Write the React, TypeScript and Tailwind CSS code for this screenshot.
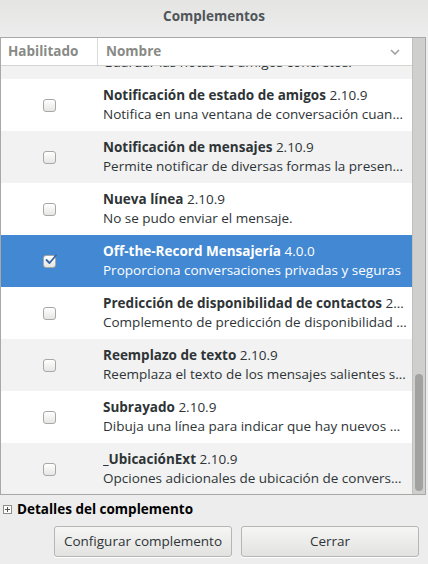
import { ReactNode } from 'react';

type Plugin = {
    name: string;
    version: string;
    desc: string;
    checked?: boolean;
};

const plugins: Plugin[] = [
    { name: 'Notas de amigos', version: '2.10.9', desc: 'Guardar las notas de amigos concretos.' },
    { name: 'Notificación de estado de amigos', version: '2.10.9', desc: 'Notifica en una ventana de conversación cuando un amigo cambia de estado' },
    { name: 'Notificación de mensajes', version: '2.10.9', desc: 'Permite notificar de diversas formas la presencia de mensajes nuevos' },
    { name: 'Nueva línea', version: '2.10.9', desc: 'No se pudo enviar el mensaje.' },
    { name: 'Off-the-Record Mensajería', version: '4.0.0', desc: 'Proporciona conversaciones privadas y seguras', checked: true },
    { name: 'Predicción de disponibilidad de contactos', version: '2.10.9', desc: 'Complemento de predicción de disponibilidad de contactos' },
    { name: 'Reemplazo de texto', version: '2.10.9', desc: 'Reemplaza el texto de los mensajes salientes según reglas' },
    { name: 'Subrayado', version: '2.10.9', desc: 'Dibuja una línea para indicar que hay nuevos mensajes' },
    { name: '_UbicaciónExt', version: '2.10.9', desc: 'Opciones adicionales de ubicación de conversaciones' },
];

function CheckBox({ checked }: { checked?: boolean }) {
    return (
        <div className="relative size-[13px] rounded-[3px] border border-[#a7a9a5] bg-gradient-to-b from-white to-[#e6e6e4] shadow-[inset_0_1px_0_#fff]">
            {checked && (
                <svg className="absolute -top-[3px] left-[1px]" width="13" height="13" viewBox="0 0 13 13">
                    <path d="M1.5 7 L4.5 10 L11 2.5" fill="none" stroke="#3465a4" strokeWidth="1.8" strokeLinecap="round" strokeLinejoin="round" />
                </svg>
            )}
        </div>
    );
}

function Button({ children }: { children: ReactNode }) {
    return (
        <button className="h-[31px] w-[178px] rounded-[3px] border border-[#b5b7b3] bg-gradient-to-b from-[#f6f6f5] to-[#e2e2e0] text-[13.5px] text-[#2e3436] shadow-[0_1px_0_#fff]">
            {children}
        </button>
    );
}

export default function App() {
    return (
        <div className="w-[428px] h-[564px] bg-[#ededed] flex flex-col text-[#2e3436] overflow-hidden" style={{ fontFamily: '"Open Sans", "DejaVu Sans", sans-serif' }}>
            <div className="h-[37px] pb-[4px] flex items-center justify-center bg-gradient-to-b from-[#e4e4e3] to-[#ededed]">
                <span className="text-[13.5px] font-bold text-[#4f5558]">Complementos</span>
            </div>

            <div className="w-[426px] h-[458px] border border-[#a8a8a6] flex">
                <div className="w-[411px] flex flex-col bg-white">
                    <div className="h-[28px] flex border-b border-[#d4d4d2] text-[13.5px] font-bold text-[#888a85]">
                        <div className="w-[97px] border-r border-[#dadad8] flex items-center pl-[7px]">Habilitado</div>
                        <div className="flex-1 flex items-center justify-between pl-[8px] pr-[12px]">
                            <span>Nombre</span>
                            <svg width="10" height="6" viewBox="0 0 10 6">
                                <path d="M1 1 L5 5 L9 1" fill="none" stroke="#a0a2a0" strokeWidth="1.6" />
                            </svg>
                        </div>
                    </div>
                    <div className="flex-1 overflow-hidden">
                        <div className="-mt-[39px]">
                            {plugins.map((p, i) => {
                                const sel = p.checked;
                                const bg = sel ? 'bg-[#4288d3] text-white' : i % 2 === 0 ? 'bg-[#f2f2f2]' : 'bg-white';
                                return (
                                    <div key={p.name} className={`h-[52px] flex ${bg}`}>
                                        <div className="w-[97px] flex items-center justify-center">
                                            <CheckBox checked={p.checked} />
                                        </div>
                                        <div className="flex-1 min-w-0 flex flex-col justify-center pl-[5px] pr-[5px] text-[13.5px] leading-[19px]">
                                            <div className="truncate">
                                                <span className="font-bold">{p.name}</span> {p.version}
                                            </div>
                                            <div className="truncate">{p.desc}</div>
                                        </div>
                                    </div>
                                );
                            })}
                        </div>
                    </div>
                </div>
                <div className="w-[13px] bg-[#cfd0ce] border-l border-[#c0c0be] flex flex-col pt-[336px]">
                    <div className="mx-auto w-[8px] h-[117px] rounded-full bg-[#a2a3a1]" />
                </div>
            </div>

            <div className="h-[29px] flex items-center pl-[3px] gap-[5px]">
                <div className="size-[9px] border border-[#8c8e8a] bg-white relative flex items-center justify-center">
                    <div className="absolute w-[5px] h-px bg-[#555]" />
                    <div className="absolute w-px h-[5px] bg-[#555]" />
                </div>
                <span className="text-[13.5px] font-bold text-black">Detalles del complemento</span>
            </div>

            <div className="mt-[2px] flex justify-end gap-[9px] pr-[9px]">
                <Button>Configurar complemento</Button>
                <Button>Cerrar</Button>
            </div>
        </div>
    );
}
